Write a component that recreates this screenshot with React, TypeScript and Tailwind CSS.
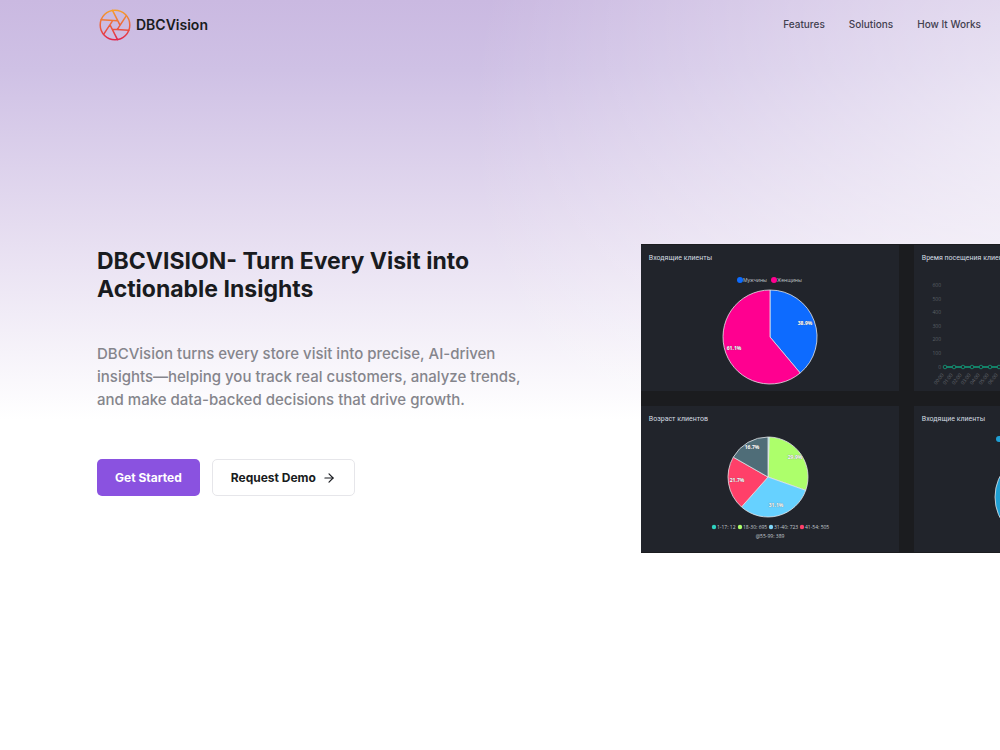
import type { ReactNode } from "react";
import { ArrowRight } from "lucide-react";

// ---------------------------------------------------------------------------
// Data
// ---------------------------------------------------------------------------
const NAV_LINKS = [
  { label: "Features", href: "#features" },
  { label: "Solutions", href: "#solutions" },
  { label: "How It Works", href: "#how-it-works" },
];

interface Slice {
  value: number;
  color: string;
  label?: string;
  x?: number;
  y?: number;
}

const GENDER: Slice[] = [
  { value: 38.9, color: "#0d6bff", label: "38.9%", x: 164, y: 80 },
  { value: 61.1, color: "#ff0090", label: "61.1%", x: 93, y: 105 },
];

const AGES: Slice[] = [
  { value: 12, color: "#2ed3c0" },
  { value: 695, color: "#adff6b", label: "29.9%", x: 154, y: 53 },
  { value: 723, color: "#66d1ff", label: "31.1%", x: 135, y: 101 },
  { value: 505, color: "#ff4069", label: "21.7%", x: 96, y: 76 },
  { value: 389, color: "#4f6d78", label: "16.7%", x: 111, y: 43 },
];

const AGE_LEGEND = [
  { x: 73, color: "#2ed3c0", text: "1-17: 12" },
  { x: 99, color: "#adff6b", text: "18-30: 695" },
  { x: 130, color: "#7fd6f7", text: "31-40: 723" },
  { x: 161, color: "#ff4069", text: "41-54: 505" },
];

const VISIT_TICKS = [600, 500, 400, 300, 200, 100, 0];
const HOURS = ["00:00", "01:00", "02:00", "03:00", "04:00", "05:00", "06:00"];

// ---------------------------------------------------------------------------
// Logo
// ---------------------------------------------------------------------------
function rotate(x: number, y: number, deg: number) {
  const a = (deg * Math.PI) / 180;
  return `${18 + x * Math.cos(a) - y * Math.sin(a)} ${18 + x * Math.sin(a) + y * Math.cos(a)}`;
}

// six shutter blades, each running from the rim to the far corner of the hexagon
const BLADES = [0, 60, 120, 180, 240, 300]
  .map((deg) => `M${rotate(-2.5, -14.6, deg)} L${rotate(5, 0.2, deg)}`)
  .join(" ");

function Logo() {
  return (
    <svg viewBox="0 0 36 36" className="size-9" fill="none" stroke="url(#logo)" strokeWidth="1.5" strokeLinecap="round" aria-hidden="true">
      <defs>
        <linearGradient id="logo" gradientUnits="userSpaceOnUse" x1="18" y1="3" x2="18" y2="33">
          <stop offset="0" stopColor="#f6a12c" />
          <stop offset="1" stopColor="#e2264d" />
        </linearGradient>
      </defs>
      <circle cx="18" cy="18" r="14.8" />
      <path d={BLADES} />
    </svg>
  );
}

// ---------------------------------------------------------------------------
// Charts
// ---------------------------------------------------------------------------
function Pie({ cx, cy, r, slices }: { cx: number; cy: number; r: number; slices: Slice[] }) {
  const total = slices.reduce((sum, s) => sum + s.value, 0);
  let start = 0;

  return (
    <g>
      {slices.map((s) => {
        const end = start + (s.value / total) * Math.PI * 2;
        const large = end - start > Math.PI ? 1 : 0;
        const d = `M${cx} ${cy} L${cx + r * Math.sin(start)} ${cy - r * Math.cos(start)} A${r} ${r} 0 ${large} 1 ${cx + r * Math.sin(end)} ${cy - r * Math.cos(end)} Z`;
        start = end;
        return <path key={s.color} d={d} fill={s.color} stroke="#e4e6ea" strokeWidth="0.8" strokeLinejoin="round" />;
      })}
      {slices.map((s) =>
        s.label ? (
          <text
            key={s.label}
            x={s.x}
            y={s.y}
            textAnchor="middle"
            className="fill-white text-[5px] font-bold [text-shadow:0_0_1px_#555]"
          >
            {s.label}
          </text>
        ) : null
      )}
    </g>
  );
}

function ChartCard({ title, children }: { title: string; children: ReactNode }) {
  return (
    <section className="bg-[#21242b]">
      <h2 className="whitespace-nowrap px-2 pt-2 font-[Roboto,sans-serif] text-[7px] leading-[10px] text-[#d3dbe0]">
        {title}
      </h2>
      <svg viewBox="0 18 258 128" className="block h-32 w-full">
        {children}
      </svg>
    </section>
  );
}

function Dashboard() {
  return (
    <div className="grid w-max grid-cols-[258px_258px] gap-[15px] bg-[#1b1c1f] py-px font-['Open_Sans','Noto_Sans',sans-serif]">
      <ChartCard title="Входящие клиенты">
        <circle cx="99" cy="35" r="3" fill="#0d6bff" />
        <text x="102" y="37" className="fill-[#c3c9cf] text-[5px]">Мужчины</text>
        <circle cx="133" cy="35" r="3" fill="#ff0090" />
        <text x="136" y="37" className="fill-[#c3c9cf] text-[5px]">Женщины</text>
        <Pie cx={129} cy={92} r={47} slices={GENDER} />
      </ChartCard>

      <ChartCard title="Время посещения клиентов">
        {VISIT_TICKS.map((tick, i) => (
          <text key={tick} x="27" y={42 + i * 13.6} textAnchor="end" className="fill-[#5c6066] text-[5px]">
            {tick}
          </text>
        ))}
        <line x1="30" y1="122" x2="250" y2="122" stroke="#12a07c" strokeWidth="1.4" />
        {HOURS.map((hour, i) => (
          <g key={hour}>
            <circle cx={31 + i * 9} cy="122" r="1.8" fill="#21242b" stroke="#12a07c" strokeWidth="0.8" />
            <text
              x={30 + i * 9}
              y="130"
              textAnchor="end"
              transform={`rotate(-52 ${30 + i * 9} 130)`}
              className="fill-[#63676d] text-[5px]"
            >
              {hour}
            </text>
          </g>
        ))}
      </ChartCard>

      <ChartCard title="Возраст клиентов">
        <Pie cx={127} cy={71} r={40} slices={AGES} />
        {AGE_LEGEND.map((item) => (
          <g key={item.text}>
            <circle cx={item.x} cy="121" r="2.2" fill={item.color} />
            <text x={item.x + 3} y="123" className="fill-[#c3c9cf] text-[5px]">{item.text}</text>
          </g>
        ))}
        <text x="129" y="132" textAnchor="middle" className="fill-[#c3c9cf] text-[5px]">@55-99: 389</text>
      </ChartCard>

      <ChartCard title="Входящие клиенты">
        <circle cx="85" cy="33" r="3" fill="#1f9fd4" />
        <circle cx="127" cy="91" r="46" fill="#1f9fd4" stroke="#e4e6ea" strokeWidth="0.8" />
      </ChartCard>
    </div>
  );
}

// ---------------------------------------------------------------------------
// Page
// ---------------------------------------------------------------------------
export default function App() {
  return (
    <div className="min-h-screen overflow-hidden bg-white bg-[radial-gradient(ellipse_580px_560px_at_105%_130px,rgba(255,255,255,0.6),rgba(255,255,255,0)),linear-gradient(to_bottom,#cab9e1_0px,#cfc1e5_70px,#e5dcf0_225px,#ffffff_420px)] font-[Inter,sans-serif] text-[#191b20]">
      <header className="flex h-[49px] items-center justify-between pl-[97px] pr-[19px]">
        <a href="#home" className="flex items-center gap-[3px]">
          <Logo />
          <span className="text-sm font-semibold">DBCVision</span>
        </a>
        <nav className="flex gap-6">
          {NAV_LINKS.map((link) => (
            <a key={link.href} href={link.href} className="text-[10px] font-medium text-[#42404f]">
              {link.label}
            </a>
          ))}
        </nav>
      </header>

      <main className="grid grid-cols-[3fr_2fr] gap-[5px] pl-[97px] pt-[195px]">
        <div className="pt-[3px]">
          <h1 className="max-w-[400px] text-[23px] leading-7 font-bold">
            DBCVISION- Turn Every Visit into Actionable Insights
          </h1>
          <p className="mt-[39px] max-w-[440px] text-[15px] leading-[23px] font-medium text-[#85858c]">
            DBCVision turns every store visit into precise, AI-driven insights—helping you track real customers,
            analyze trends, and make data-backed decisions that drive growth.
          </p>
          <div className="mt-12 flex gap-3">
            <button type="button" className="h-[37px] rounded-[5px] bg-[#8a52e0] px-[18px] text-xs font-bold text-white">
              Get Started
            </button>
            <button
              type="button"
              className="flex h-[37px] items-center gap-1.5 rounded-[5px] border border-[#e6e6ea] bg-white px-[18px] text-xs font-bold"
            >
              Request Demo
              <ArrowRight className="size-3.5" />
            </button>
          </div>
        </div>

        <div className="min-w-0 overflow-hidden">
          <Dashboard />
        </div>
      </main>
    </div>
  );
}
